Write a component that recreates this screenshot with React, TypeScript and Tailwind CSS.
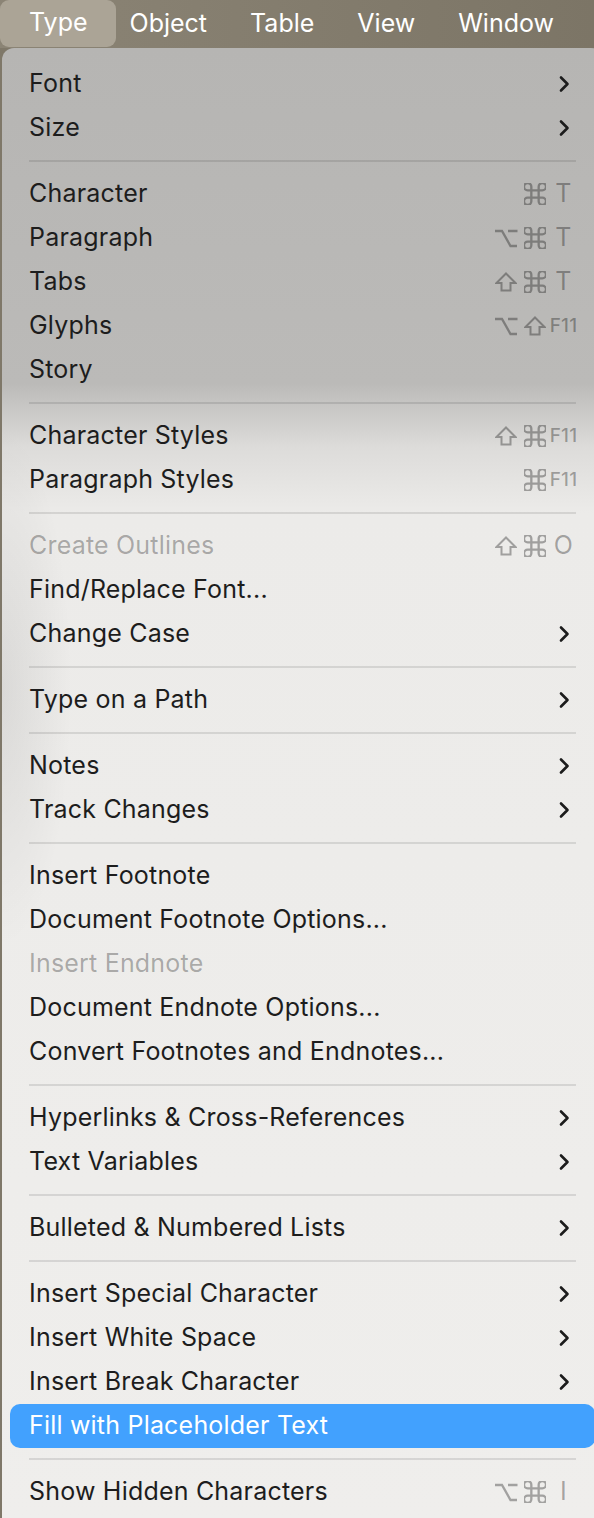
type Item =
  | { sep: true }
  | { label: string; keys?: string[]; sub?: boolean; disabled?: boolean; active?: boolean };

const items: Item[] = [
  { label: "Font", sub: true },
  { label: "Size", sub: true },
  { sep: true },
  { label: "Character", keys: ["cmd", "T"] },
  { label: "Paragraph", keys: ["opt", "cmd", "T"] },
  { label: "Tabs", keys: ["shift", "cmd", "T"] },
  { label: "Glyphs", keys: ["opt", "shift", "F11"] },
  { label: "Story" },
  { sep: true },
  { label: "Character Styles", keys: ["shift", "cmd", "F11"] },
  { label: "Paragraph Styles", keys: ["cmd", "F11"] },
  { sep: true },
  { label: "Create Outlines", keys: ["shift", "cmd", "O"], disabled: true },
  { label: "Find/Replace Font..." },
  { label: "Change Case", sub: true },
  { sep: true },
  { label: "Type on a Path", sub: true },
  { sep: true },
  { label: "Notes", sub: true },
  { label: "Track Changes", sub: true },
  { sep: true },
  { label: "Insert Footnote" },
  { label: "Document Footnote Options..." },
  { label: "Insert Endnote", disabled: true },
  { label: "Document Endnote Options..." },
  { label: "Convert Footnotes and Endnotes..." },
  { sep: true },
  { label: "Hyperlinks & Cross-References", sub: true },
  { label: "Text Variables", sub: true },
  { sep: true },
  { label: "Bulleted & Numbered Lists", sub: true },
  { sep: true },
  { label: "Insert Special Character", sub: true },
  { label: "Insert White Space", sub: true },
  { label: "Insert Break Character", sub: true },
  { label: "Fill with Placeholder Text", active: true },
  { sep: true },
  { label: "Show Hidden Characters", keys: ["opt", "cmd", "I"] },
];

const menus = ["Type", "Object", "Table", "View", "Window"];

function Chevron() {
  return (
    <svg width="12" height="18" viewBox="0 0 12 18" fill="none">
      <path d="M3 2.5 L9.5 9 L3 15.5" stroke="#1c1c1c" strokeWidth="2.6" strokeLinecap="round" strokeLinejoin="round" />
    </svg>
  );
}

// modifier key glyphs
function Mod({ k }: { k: string }) {
  if (k === "cmd")
    return (
      <svg width="22" height="22" viewBox="3 3 18 18" fill="none" stroke="currentColor" strokeWidth="1.9" strokeLinecap="round" strokeLinejoin="round">
        <path d="M15 6v12a3 3 0 1 0 3-3H6a3 3 0 1 0 3 3V6a3 3 0 1 0-3 3h12a3 3 0 1 0-3-3" />
      </svg>
    );
  if (k === "opt")
    return (
      <svg width="24" height="19" viewBox="0 0 24 19" fill="none" stroke="currentColor" strokeWidth="2.3" strokeLinejoin="miter">
        <path d="M1 2h7l8.5 15H23M14 2h9.5" />
      </svg>
    );
  return (
    <svg width="22" height="20" viewBox="0 0 22 20" fill="none" stroke="currentColor" strokeWidth="2" strokeLinejoin="miter">
      <path d="M11 1.5L20.5 11H15.5V18.5H6.5V11H1.5Z" />
    </svg>
  );
}

function Keys({ keys }: { keys: string[] }) {
  return (
    <div className="flex items-center text-black/[0.32]">
      {keys.map((k, i) => (
        <span key={i} className="w-[29px] flex items-center justify-center">
          {k === "F11" ? (
            <span className="text-[19px] font-medium">F11</span>
          ) : k.length === 1 ? (
            <span className="text-[25px]">{k}</span>
          ) : (
            <Mod k={k} />
          )}
        </span>
      ))}
    </div>
  );
}

export default function App() {
  return (
    <div className="w-[594px] h-[1518px] overflow-hidden bg-[#7f7869] font-['Inter',sans-serif]">
      {/* menu bar */}
      <div className="h-[48px] flex items-center bg-gradient-to-r from-[#8b8475] to-[#7c7566] text-white text-[25px]">
        {menus.map((m, i) => (
          <div
            key={m}
            className={
              i === 0
                ? "h-[47px] self-start flex items-center pl-[29px] pr-[28px] pb-[1px] rounded-[9px] bg-[#aba496]"
                : i === 1
                ? "ml-[14px] pb-[1px]"
                : "ml-[43px] pb-[1px]"
            }
          >
            {m}
          </div>
        ))}
      </div>

      {/* dropdown */}
      <div className="ml-[2px] w-[601px] rounded-t-[12px] pt-[14px] pb-[10px] bg-[radial-gradient(ellipse_70px_260px_at_0px_640px,rgba(0,0,0,0.08),transparent),linear-gradient(180deg,#b6b5b3_0px,#bbbab8_335px,#dddcda_400px,#ecebe9_465px,#efeeec_100%)]">
        {items.map((it, i) =>
          "sep" in it ? (
            <div key={i} className="h-[22px] flex items-center px-[27px]">
              <div className="h-[2px] w-full bg-black/10" />
            </div>
          ) : (
            <div
              key={i}
              className={
                "mx-[8px] h-[44px] pl-[19px] pr-[17px] flex items-center justify-between text-[25px] tracking-[0.2px] rounded-[10px] " +
                (it.active ? "bg-[#42a1fe] text-white" : it.disabled ? "text-black/30" : "text-[#1d1d1d]")
              }
            >
              <span>{it.label}</span>
              {it.keys && <Keys keys={it.keys} />}
              {it.sub && (
                <span className="w-[29px] flex justify-center">
                  <Chevron />
                </span>
              )}
            </div>
          )
        )}
      </div>
    </div>
  );
}
